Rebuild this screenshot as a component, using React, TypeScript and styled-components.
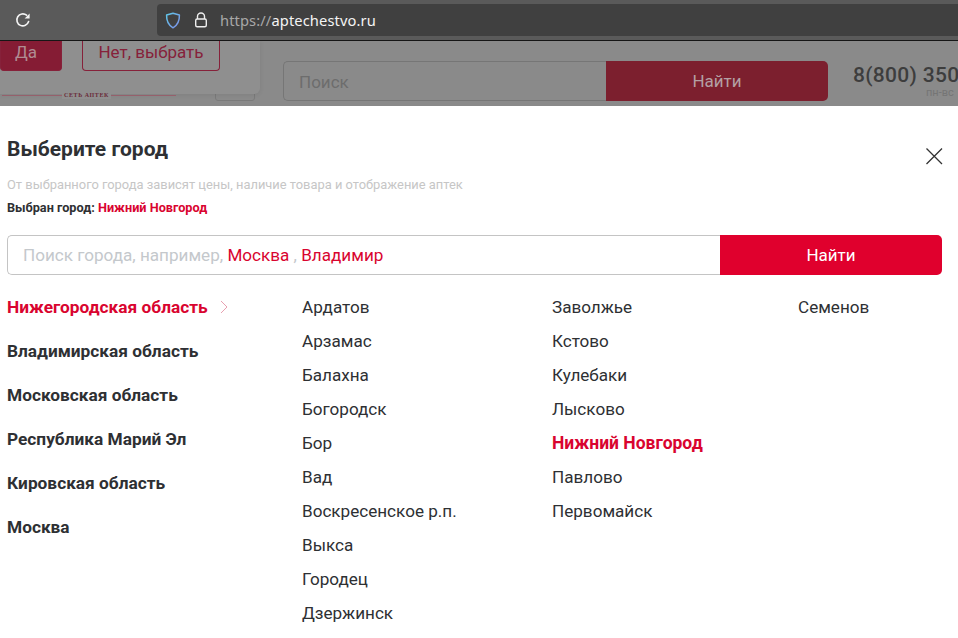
import React from "react";
import styled, { createGlobalStyle } from "styled-components";

const Global = createGlobalStyle`
  html, body { margin: 0; padding: 0; background: #fff; }
  body { font-family: Roboto, "Liberation Sans", sans-serif; overflow: hidden; }
  * { box-sizing: border-box; }
`;

const Page = styled.div`
  width: 958px;
  height: 638px;
  overflow: hidden;
  display: flex;
  flex-direction: column;
`;

const BrowserBar = styled.div`
  height: 41px;
  flex: none;
  background: #5a5a5a;
  border-bottom: 1px solid #161616;
  padding: 4px 0 4px 0;
  display: flex;
`;

const ReloadSlot = styled.div`
  width: 157px;
  flex: none;
  padding-left: 15px;
  display: flex;
  align-items: center;
`;

const UrlBar = styled.div`
  flex: 1;
  background: #404040;
  border-radius: 4px 0 0 4px;
  display: flex;
  align-items: center;
  padding-left: 8px;
  gap: 13px;
`;

const Url = styled.div`
  font-family: "Noto Sans", Roboto, sans-serif;
  font-size: 14.7px;
  letter-spacing: 0.1px;
  color: #f4f4f4;
  margin-left: -1px;
`;

const UrlScheme = styled.span`
  color: #a8a8a8;
`;

const SiteHeader = styled.div`
  position: relative;
  height: 65px;
  flex: none;
  background: #8a8a8a;
  overflow: hidden;
  display: flex;
  padding: 20px 0 0 283px;
`;

const Popup = styled.div`
  position: absolute;
  left: 0;
  top: 0;
  width: 260px;
  height: 53px;
  background: #8f8f8f;
  box-shadow: 0 1px 5px rgba(0, 0, 0, 0.08);
  border-radius: 0 0 6px 0;
  display: flex;
  align-items: flex-start;
  gap: 20px;
`;

const PopupButton = styled.div<{ $filled?: boolean }>`
  width: ${(p) => (p.$filled ? "62px" : "138px")};
  height: 30px;
  border-radius: 0 0 4px 4px;
  border: 1px solid #86213a;
  border-top: none;
  background: ${(p) => (p.$filled ? "#851c34" : "transparent")};
  color: ${(p) => (p.$filled ? "#b08c92" : "#86213a")};
  font-size: 17px;
  display: flex;
  align-items: center;
  justify-content: center;
  padding-bottom: 8px;
  padding-right: ${(p) => (p.$filled ? "10px" : "0")};
`;

const PopupLogo = styled.div`
  position: absolute;
  left: 2px;
  top: 53.5px;
  width: 174px;
  height: 1.5px;
  background: #96606c;
`;

const PopupLogoText = styled.span`
  position: absolute;
  left: 60px;
  top: -3px;
  padding: 0 2px;
  background: #8f8f8f;
  font-family: "Liberation Serif", serif;
  font-size: 6px;
  font-weight: 700;
  line-height: 7px;
  letter-spacing: 0.6px;
  color: #6a2a38;
`;

const MiniButton = styled.div`
  position: absolute;
  left: 215px;
  top: 40px;
  width: 40px;
  height: 20px;
  border: 1px solid #7a7a7a;
  border-radius: 3px;
`;

const SiteSearch = styled.div`
  width: 545px;
  height: 40px;
  flex: none;
  display: flex;
`;

const SiteInput = styled.div`
  width: 323px;
  border: 1px solid #767676;
  border-right: none;
  border-radius: 5px 0 0 5px;
  color: #6d6d6d;
  font-size: 17px;
  display: flex;
  align-items: center;
  padding-left: 15px;
  padding-top: 2px;
`;

const SiteSubmit = styled.div`
  flex: 1;
  background: #7c1f2e;
  border-radius: 0 5px 5px 0;
  color: #b4a0a4;
  font-size: 17px;
  display: flex;
  align-items: center;
  justify-content: center;
`;

const Phone = styled.div`
  margin-left: 25px;
  white-space: nowrap;
  margin-top: 2px;
  overflow: hidden;
  width: 105px;
  flex: none;
`;

const PhoneNumber = styled.div`
  font-size: 21px;
  font-weight: 500;
  line-height: 24px;
  letter-spacing: 0.3px;
  color: #3d3d3d;
`;

const PhoneHours = styled.div`
  font-size: 11px;
  line-height: 12px;
  color: #757575;
  margin-left: 73px;
`;

const Modal = styled.div`
  position: relative;
  flex: 1;
  background: #fff;
  padding: 30px 16px 0 7px;
  overflow: hidden;
`;

const Title = styled.h2`
  margin: 0;
  font-size: 21px;
  line-height: 26px;
  font-weight: 700;
  color: #2e3033;
`;

const CloseButton = styled.div`
  position: absolute;
  right: 14px;
  top: 40px;
  width: 20px;
  height: 20px;
  color: #333;
`;

const Hint = styled.p`
  margin: 16px 0 0;
  font-size: 12.9px;
  line-height: 14px;
  color: #c6c6c6;
`;

const Chosen = styled.p`
  margin: 9px 0 0;
  font-size: 12.7px;
  line-height: 14px;
  font-weight: 700;
  color: #2e3033;
`;

const Red = styled.span`
  color: #d9042f;
`;

const SearchRow = styled.div`
  display: flex;
  height: 40px;
  margin-top: 20px;
`;

const SearchField = styled.div`
  width: 713px;
  flex: none;
  border: 1px solid #c4c4c4;
  border-right: none;
  border-radius: 5px 0 0 5px;
  font-size: 17.1px;
  color: #c4c8cc;
  display: flex;
  align-items: center;
  padding-left: 15px;
  white-space: pre;
`;

const SearchButton = styled.div`
  flex: 1;
  background: #e0002d;
  border-radius: 0 5px 5px 0;
  color: #fff;
  font-size: 17px;
  display: flex;
  align-items: center;
  justify-content: center;
`;

const Columns = styled.div`
  display: flex;
  margin-top: 20px;
`;

const Regions = styled.ul`
  list-style: none;
  margin: 0;
  padding: 0;
  width: 295px;
  flex: none;
  display: flex;
  flex-direction: column;
  gap: 20px;
`;

const Region = styled.li<{ $active?: boolean }>`
  font-size: 17.3px;
  line-height: 24px;
  font-weight: 700;
  color: ${(p) => (p.$active ? "#d9042f" : "#2e3033")};
  display: flex;
  align-items: center;
  gap: 12px;
`;

const Cities = styled.ul<{ $width: number }>`
  list-style: none;
  margin: 0;
  padding: 0;
  width: ${(p) => p.$width}px;
  flex: none;
  display: flex;
  flex-direction: column;
  gap: 10px;
`;

const City = styled.li<{ $active?: boolean }>`
  font-size: ${(p) => (p.$active ? "17.5px" : "17.1px")};
  line-height: 24px;
  font-weight: ${(p) => (p.$active ? 700 : 400)};
  color: ${(p) => (p.$active ? "#d9042f" : "#2e3033")};
`;

const regions = ["Владимирская область", "Московская область", "Республика Марий Эл", "Кировская область", "Москва"];
const cityColumns: { width: number; items: string[] }[] = [
  { width: 250, items: ["Ардатов", "Арзамас", "Балахна", "Богородск", "Бор", "Вад", "Воскресенское р.п.", "Выкса", "Городец", "Дзержинск"] },
  { width: 246, items: ["Заволжье", "Кстово", "Кулебаки", "Лысково", "Нижний Новгород", "Павлово", "Первомайск"] },
  { width: 120, items: ["Семенов"] },
];

export default function App() {
  return (
    <Page>
      <Global />
      <BrowserBar>
        <ReloadSlot>
          <svg width="16" height="16" viewBox="0 0 16 16" fill="none">
            <path d="M13.6 9.6A6 6 0 1 1 11.6 3.2" stroke="#f4f4f4" strokeWidth="1.6" strokeLinecap="round" />
            <path d="M14.6 1.4v5h-5z" fill="#f4f4f4" />
          </svg>
        </ReloadSlot>
        <UrlBar>
          <svg width="16" height="17" viewBox="0 0 16 17" fill="none">
            <defs>
              <linearGradient id="shield" x1="0" y1="0" x2="1" y2="1">
                <stop offset="0" stopColor="#5fc8e8" />
                <stop offset="1" stopColor="#7f8fe8" />
              </linearGradient>
            </defs>
            <path d="M8 1.2 14.4 3c.2 5.600-1.800 10.200-6.400 12.800C3.400 13.200 1.400 8.600 1.600 3z" stroke="url(#shield)" strokeWidth="1.5" strokeLinejoin="round" />
          </svg>
          <svg width="14" height="16" viewBox="0 0 14 16" fill="none" stroke="#eeeeee" strokeWidth="1.4">
            <path d="M3.500 7V4.500a3.500 3.500 0 0 1 7 0V7" />
            <rect x="1.700" y="7" width="10.600" height="7.800" rx="1.500" />
          </svg>
          <Url>
            <UrlScheme>https://</UrlScheme>aptechestvo.ru
          </Url>
        </UrlBar>
      </BrowserBar>
      <SiteHeader>
        <MiniButton />
        <Popup>
          <PopupButton $filled>Да</PopupButton>
          <PopupButton>Нет, выбрать</PopupButton>
          <PopupLogo>
            <PopupLogoText>СЕТЬ АПТЕК</PopupLogoText>
          </PopupLogo>
        </Popup>
        <SiteSearch>
          <SiteInput>Поиск</SiteInput>
          <SiteSubmit>Найти</SiteSubmit>
        </SiteSearch>
        <Phone>
          <PhoneNumber>8(800) 350</PhoneNumber>
          <PhoneHours>пн-вс</PhoneHours>
        </Phone>
      </SiteHeader>
      <Modal>
        <Title>Выберите город</Title>
        <CloseButton>
          <svg width="20" height="20" viewBox="0 0 20 20" fill="none" stroke="currentColor" strokeWidth="1.300">
            <path d="M2.500 2.500 18 18M18 2.500 2.500 18" />
          </svg>
        </CloseButton>
        <Hint>От выбранного города зависят цены, наличие товара и отображение аптек</Hint>
        <Chosen>
          Выбран город: <Red>Нижний Новгород</Red>
        </Chosen>
        <SearchRow>
          <SearchField>
            Поиск города, например, <Red>Москва</Red> , <Red>Владимир</Red>
          </SearchField>
          <SearchButton>Найти</SearchButton>
        </SearchRow>
        <Columns>
          <Regions>
            <Region $active>
              Нижегородская область
              <svg width="8" height="14" viewBox="0 0 8 14" fill="none" stroke="#e8a0b0" strokeWidth="1">
                <path d="M1 1l6 6-6 6" />
              </svg>
            </Region>
            {regions.map((r) => (
              <Region key={r}>{r}</Region>
            ))}
          </Regions>
          {cityColumns.map((col) => (
            <Cities key={col.items[0]} $width={col.width}>
              {col.items.map((c) => (
                <City key={c} $active={c === "Нижний Новгород"}>
                  {c}
                </City>
              ))}
            </Cities>
          ))}
        </Columns>
      </Modal>
    </Page>
  );
}
